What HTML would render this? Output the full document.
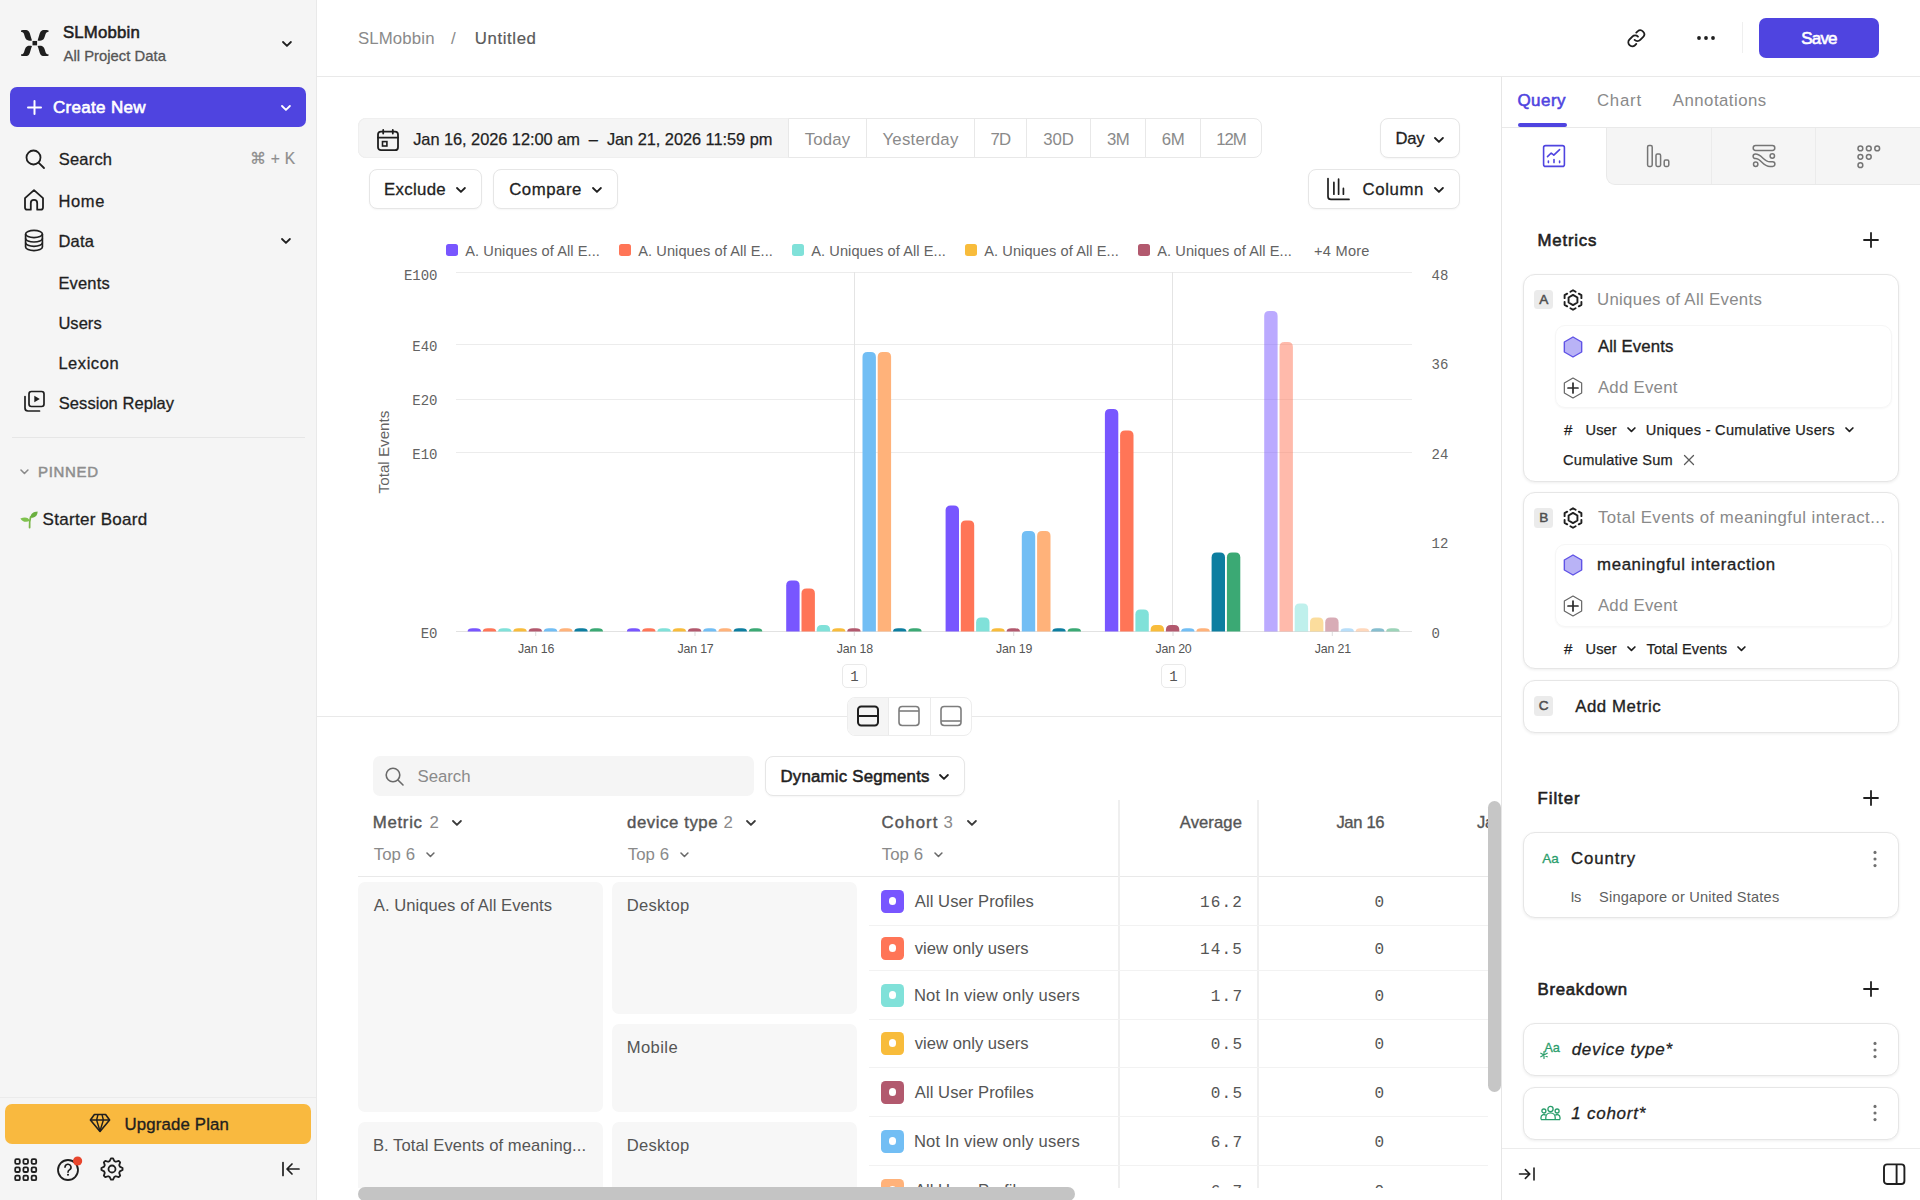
<!DOCTYPE html>
<html><head><meta charset="utf-8"><title>Untitled - Mixpanel</title>
<style>
*{box-sizing:border-box;margin:0;padding:0}
html,body{width:1920px;height:1200px;overflow:hidden;background:#fff}
body{font-family:"Liberation Sans",sans-serif;position:relative;color:#1f1f1f;-webkit-font-smoothing:antialiased}
.b{position:absolute;display:block}
.t{position:absolute;white-space:nowrap}
.card{position:absolute;background:#fff;border:1px solid #e6e6e6;border-radius:12px;box-shadow:0 1px 3px rgba(0,0,0,.07)}
.btn{position:absolute;background:#fff;border:1px solid #e6e6e6;border-radius:8px;box-shadow:0 1px 2px rgba(0,0,0,.04)}
</style></head><body>

<div class="b" style="left:0px;top:0px;width:317px;height:1200px;background:#f5f5f5;border-right:1px solid #e9e9e9"></div>
<svg class="b" style="left:21.0px;top:29.8px;" width="27.6" height="26.3" viewBox="0 0 27.6 26.3" fill="none">
<path d="M0 0.45 C3 0 6.6 -0.5 8.1 1.8 C9.3 4 9.8 7.5 11 10.4 C8 11 5.6 10.5 4.6 8.6 C3.6 6.6 3.3 4.2 2.5 3.1 C1.9 2.2 1.1 1.95 0.15 1.95 Z" fill="#1f1f1f"/>
<path d="M0 0.45 C3 0 6.6 -0.5 8.1 1.8 C9.3 4 9.8 7.5 11 10.4 C8 11 5.6 10.5 4.6 8.6 C3.6 6.6 3.3 4.2 2.5 3.1 C1.9 2.2 1.1 1.95 0.15 1.95 Z" fill="#1f1f1f" transform="translate(27.6 0) scale(-1 1)"/>
<path d="M0 0.45 C3 0 6.6 -0.5 8.1 1.8 C9.3 4 9.8 7.5 11 10.4 C8 11 5.6 10.5 4.6 8.6 C3.6 6.6 3.3 4.2 2.5 3.1 C1.9 2.2 1.1 1.95 0.15 1.95 Z" fill="#1f1f1f" transform="translate(0 26.3) scale(1 -1)"/>
<path d="M0 0.45 C3 0 6.6 -0.5 8.1 1.8 C9.3 4 9.8 7.5 11 10.4 C8 11 5.6 10.5 4.6 8.6 C3.6 6.6 3.3 4.2 2.5 3.1 C1.9 2.2 1.1 1.95 0.15 1.95 Z" fill="#1f1f1f" transform="translate(27.6 26.3) scale(-1 -1)"/>
<rect x="11.5" y="10.95" width="4.6" height="4.4" fill="#1f1f1f"/>
</svg>
<div class="t" style="left:63.0px;top:20.5px;line-height:24px;font-size:16.8px;font-weight:400;color:#1f1f1f;-webkit-text-stroke:.55px #1f1f1f;letter-spacing:0.17px;">SLMobbin</div>
<div class="t" style="left:63.5px;top:43.5px;line-height:24px;font-size:14.8px;font-weight:400;color:#555;-webkit-text-stroke:.3px #555;letter-spacing:0.03px;">All Project Data</div>
<svg class="b" style="left:281.05px;top:40.025px;" width="11.9" height="7.95" viewBox="0 0 11.9 7.95" fill="none"><path d="M2 2 L5.95 5.95 L9.9 2" stroke="#1f1f1f" stroke-width="1.8" stroke-linecap="round" stroke-linejoin="round"/></svg>
<div class="b" style="left:10px;top:87px;width:296px;height:40px;background:#4f44e0;border-radius:7px"></div>
<svg class="b" style="left:26.700000000000003px;top:99.9px;" width="15" height="15" viewBox="0 0 15 15" fill="none"><path d="M7.5 1 V14 M1 7.5 H14" stroke="#fff" stroke-width="2" stroke-linecap="round"/></svg>
<div class="t" style="left:53.0px;top:95.5px;line-height:24px;font-size:17px;font-weight:400;color:#fff;-webkit-text-stroke:.6px #fff;letter-spacing:0.31px;">Create New</div>
<svg class="b" style="left:279.55px;top:104.025px;" width="11.9" height="7.95" viewBox="0 0 11.9 7.95" fill="none"><path d="M2 2 L5.95 5.95 L9.9 2" stroke="#fff" stroke-width="1.8" stroke-linecap="round" stroke-linejoin="round"/></svg>
<svg class="b" style="left:24px;top:148px;" width="22" height="22" viewBox="0 0 22 22" fill="none"><circle cx="9.5" cy="9.5" r="7" stroke="#1f1f1f" stroke-width="1.8"/><path d="M14.8 14.8 L20 20" stroke="#1f1f1f" stroke-width="1.8" stroke-linecap="round"/></svg>
<div class="t" style="left:58.8px;top:147.0px;line-height:24px;font-size:16.5px;font-weight:400;color:#1f1f1f;-webkit-text-stroke:.3px #1f1f1f;letter-spacing:0.19px;">Search</div>
<div class="t" style="right:1624.5px;text-align:right;top:147.0px;line-height:24px;font-size:15.6px;font-weight:400;color:#8e8e8e;-webkit-text-stroke:.2px #8e8e8e;letter-spacing:0.26px;">&#8984; + K</div>
<svg class="b" style="left:23px;top:188px;" width="22" height="24" viewBox="0 0 22 24" fill="none"><path d="M2 10.2 L11 2.2 L20 10.2 V19.5 a2.2 2.2 0 0 1 -2.2 2.2 H14.2 V15 a3.2 3.2 0 0 0 -6.4 0 V21.7 H4.2 A2.2 2.2 0 0 1 2 19.5 Z" stroke="#1f1f1f" stroke-width="1.8" stroke-linejoin="round"/></svg>
<div class="t" style="left:58.4px;top:189.0px;line-height:24px;font-size:16.5px;font-weight:400;color:#1f1f1f;-webkit-text-stroke:.3px #1f1f1f;letter-spacing:0.67px;">Home</div>
<svg class="b" style="left:24px;top:229px;" width="20" height="23" viewBox="0 0 20 23" fill="none"><ellipse cx="10" cy="5" rx="8.4" ry="3.6" stroke="#1f1f1f" stroke-width="1.7"/>
<path d="M1.6 5 V18 c0 2 3.8 3.6 8.4 3.6 s8.4 -1.6 8.4 -3.6 V5" stroke="#1f1f1f" stroke-width="1.7"/>
<path d="M1.6 9.4 c0 2 3.8 3.6 8.4 3.6 s8.4 -1.6 8.4 -3.6 M1.6 13.7 c0 2 3.8 3.6 8.4 3.6 s8.4 -1.6 8.4 -3.6" stroke="#1f1f1f" stroke-width="1.7"/></svg>
<div class="t" style="left:58.4px;top:229.0px;line-height:24px;font-size:16.5px;font-weight:400;color:#1f1f1f;-webkit-text-stroke:.3px #1f1f1f;letter-spacing:0.26px;">Data</div>
<svg class="b" style="left:280.05px;top:237.025px;" width="11.9" height="7.95" viewBox="0 0 11.9 7.95" fill="none"><path d="M2 2 L5.95 5.95 L9.9 2" stroke="#1f1f1f" stroke-width="1.8" stroke-linecap="round" stroke-linejoin="round"/></svg>
<div class="t" style="left:58.4px;top:271.0px;line-height:24px;font-size:16.5px;font-weight:400;color:#1f1f1f;-webkit-text-stroke:.3px #1f1f1f;letter-spacing:0.17px;">Events</div>
<div class="t" style="left:58.4px;top:311.0px;line-height:24px;font-size:16.5px;font-weight:400;color:#1f1f1f;-webkit-text-stroke:.3px #1f1f1f;letter-spacing:0.04px;">Users</div>
<div class="t" style="left:58.4px;top:351.0px;line-height:24px;font-size:16.5px;font-weight:400;color:#1f1f1f;-webkit-text-stroke:.3px #1f1f1f;letter-spacing:0.55px;">Lexicon</div>
<svg class="b" style="left:23px;top:390px;" width="23" height="23" viewBox="0 0 23 23" fill="none"><rect x="6" y="1.5" width="15" height="15" rx="2.4" stroke="#1f1f1f" stroke-width="1.7"/>
<path d="M2 6.5 V18 a3 3 0 0 0 3 3 H16.5" stroke="#1f1f1f" stroke-width="1.7" stroke-linecap="round"/>
<path d="M11.3 5.8 L16.8 9 L11.3 12.2 Z" fill="#1f1f1f"/></svg>
<div class="t" style="left:58.8px;top:391.0px;line-height:24px;font-size:16.5px;font-weight:400;color:#1f1f1f;-webkit-text-stroke:.3px #1f1f1f;letter-spacing:0.05px;">Session Replay</div>
<div class="b" style="left:12px;top:437px;width:293px;height:1px;background:#e6e6e6"></div>
<svg class="b" style="left:18.55px;top:468.275px;" width="10.9" height="7.45" viewBox="0 0 10.9 7.45" fill="none"><path d="M2 2 L5.45 5.45 L8.9 2" stroke="#8a8a8a" stroke-width="1.6" stroke-linecap="round" stroke-linejoin="round"/></svg>
<div class="t" style="left:38.0px;top:460.0px;line-height:24px;font-size:15px;font-weight:400;color:#8e8e8e;-webkit-text-stroke:.5px #8e8e8e;letter-spacing:0.67px;">PINNED</div>
<svg class="b" style="left:19px;top:509px;" width="20" height="20" viewBox="0 0 20 20" fill="none"><path d="M10.6 18.5 C10.4 14 10.6 11 11.6 8" stroke="#7ab648" stroke-width="1.8" stroke-linecap="round"/>
<path d="M11.4 8.6 C11.6 4.6 14 2.6 18.6 2.4 C18.6 6.6 16 9 11.4 8.6 Z" fill="#6bb040"/>
<path d="M10.8 11.8 C9.6 8.6 6.4 7.6 1.4 9.4 C3.4 12.8 7 13.6 10.8 11.8 Z" fill="#7fc24e"/></svg>
<div class="t" style="left:42.5px;top:508.0px;line-height:24px;font-size:17px;font-weight:400;color:#1f1f1f;-webkit-text-stroke:.3px #1f1f1f;letter-spacing:0.30px;">Starter Board</div>
<div class="b" style="left:0px;top:1097px;width:316px;height:1px;background:#ebebeb"></div>
<div class="b" style="left:5px;top:1104px;width:306px;height:40px;background:#f9b93f;border-radius:7px"></div>
<svg class="b" style="left:89px;top:1113px;" width="22" height="20" viewBox="0 0 22 20" fill="none"><path d="M5.4 1.5 H16.6 L20.6 7 L11 18.4 L1.4 7 Z" stroke="#1f1f1f" stroke-width="1.6" stroke-linejoin="round"/>
<path d="M1.4 7 H20.6 M7.6 7 L11 18 L14.4 7 M7.6 7 L9 1.6 M14.4 7 L13 1.6" stroke="#1f1f1f" stroke-width="1.4" stroke-linejoin="round"/></svg>
<div class="t" style="left:124.39999999999999px;top:1113.0px;line-height:24px;font-size:16.8px;font-weight:400;color:#1f1f1f;-webkit-text-stroke:.35px #1f1f1f;letter-spacing:0.17px;">Upgrade Plan</div>
<svg class="b" style="left:14px;top:1158px;" width="24" height="24" viewBox="0 0 24 24" fill="none"><rect x="1.2" y="1.2" width="4.6" height="4.6" rx="1.3" stroke="#1f1f1f" stroke-width="1.8"/><rect x="9.399999999999999" y="1.2" width="4.6" height="4.6" rx="1.3" stroke="#1f1f1f" stroke-width="1.8"/><rect x="17.599999999999998" y="1.2" width="4.6" height="4.6" rx="1.3" stroke="#1f1f1f" stroke-width="1.8"/><rect x="1.2" y="9.399999999999999" width="4.6" height="4.6" rx="1.3" stroke="#1f1f1f" stroke-width="1.8"/><rect x="9.399999999999999" y="9.399999999999999" width="4.6" height="4.6" rx="1.3" stroke="#1f1f1f" stroke-width="1.8"/><rect x="17.599999999999998" y="9.399999999999999" width="4.6" height="4.6" rx="1.3" stroke="#1f1f1f" stroke-width="1.8"/><rect x="1.2" y="17.599999999999998" width="4.6" height="4.6" rx="1.3" stroke="#1f1f1f" stroke-width="1.8"/><rect x="9.399999999999999" y="17.599999999999998" width="4.6" height="4.6" rx="1.3" stroke="#1f1f1f" stroke-width="1.8"/><rect x="17.599999999999998" y="17.599999999999998" width="4.6" height="4.6" rx="1.3" stroke="#1f1f1f" stroke-width="1.8"/></svg>
<svg class="b" style="left:56px;top:1154px;" width="28" height="28" viewBox="0 0 28 28" fill="none"><circle cx="12" cy="16" r="10" stroke="#1f1f1f" stroke-width="1.8"/>
<path d="M9 13.2 a3 3 0 1 1 4.4 2.7 c-1 .6 -1.4 1.1 -1.4 2.3" stroke="#1f1f1f" stroke-width="1.6" stroke-linecap="round"/><circle cx="12" cy="20.8" r="1.05" fill="#1f1f1f"/>
<circle cx="21.6" cy="7" r="4.6" fill="#e8452c"/></svg>
<svg class="b" style="left:100px;top:1157px;" width="24" height="24" viewBox="0 0 24 24" fill="none"><path d="M22.55 10.96 L22.55 13.04 L19.85 14.38 L19.23 15.87 L20.19 18.72 L18.72 20.19 L15.87 19.23 L14.38 19.85 L13.04 22.55 L10.96 22.55 L9.62 19.85 L8.13 19.23 L5.28 20.19 L3.81 18.72 L4.77 15.87 L4.15 14.38 L1.45 13.04 L1.45 10.96 L4.15 9.62 L4.77 8.13 L3.81 5.28 L5.28 3.81 L8.13 4.77 L9.62 4.15 L10.96 1.45 L13.04 1.45 L14.38 4.15 L15.87 4.77 L18.72 3.81 L20.19 5.28 L19.23 8.13 L19.85 9.62 Z" stroke="#1f1f1f" stroke-width="1.8" stroke-linejoin="round"/><circle cx="12" cy="12" r="3.5" stroke="#1f1f1f" stroke-width="1.8"/></svg>
<svg class="b" style="left:281px;top:1160px;" width="20" height="18" viewBox="0 0 20 18" fill="none"><path d="M2 2.5 V15.5 M18 9 H6.5 M11 4 L6 9 L11 14" stroke="#1f1f1f" stroke-width="1.7" stroke-linecap="round" stroke-linejoin="round"/></svg>
<div class="b" style="left:317px;top:76px;width:1603px;height:1px;background:#e9e9e9"></div>
<div class="t" style="left:357.9px;top:27.0px;line-height:24px;font-size:16.8px;font-weight:400;color:#8a8a8a;letter-spacing:0.15px;">SLMobbin</div>
<div class="t" style="left:451px;top:27.0px;line-height:24px;font-size:17px;font-weight:400;color:#8a8a8a;">/</div>
<div class="t" style="left:474.70000000000005px;top:27.0px;line-height:24px;font-size:16.8px;font-weight:400;color:#5a5a5a;-webkit-text-stroke:.2px #5a5a5a;letter-spacing:0.62px;">Untitled</div>
<svg class="b" style="left:1625.6px;top:27.6px;" width="20.6" height="20.6" viewBox="0 0 22 22" fill="none"><path d="M9.2 12.8 a4.2 4.2 0 0 0 6 0 l3.2 -3.2 a4.25 4.25 0 0 0 -6 -6 l-1.4 1.4" stroke="#1f1f1f" stroke-width="1.9" stroke-linecap="round"/>
<path d="M12.8 9.2 a4.2 4.2 0 0 0 -6 0 l-3.2 3.2 a4.25 4.25 0 0 0 6 6 l1.4 -1.4" stroke="#1f1f1f" stroke-width="2" stroke-linecap="round"/></svg>
<svg class="b" style="left:1696px;top:35.4px;" width="20" height="6" viewBox="0 0 20 6" fill="none"><circle cx="3" cy="3" r="1.9" fill="#1f1f1f"/><circle cx="10" cy="3" r="1.9" fill="#1f1f1f"/><circle cx="17" cy="3" r="1.9" fill="#1f1f1f"/></svg>
<div class="b" style="left:1742px;top:22px;width:1px;height:31px;background:#efefef"></div>
<div class="b" style="left:1759px;top:18px;width:120px;height:40px;background:#4f44e0;border-radius:7px"></div>
<div class="t" style="left:1819px;transform:translateX(-50%);top:26.5px;line-height:24px;font-size:17px;font-weight:400;color:#fff;-webkit-text-stroke:.6px #fff;letter-spacing:-0.84px;">Save</div>
<div class="b" style="left:358px;top:118px;width:904px;height:40px;border:1px solid #e8e8e8;border-radius:8px;background:#fff"></div>
<div class="b" style="left:358px;top:118px;width:431px;height:40px;background:#f5f5f5;border-radius:8px 0 0 8px;border:1px solid #efefef;border-right:1px solid #e8e8e8"></div>
<svg class="b" style="left:376.3px;top:127.6px;" width="24" height="24" viewBox="0 0 24 24" fill="none"><rect x="2" y="3.6" width="20" height="18.6" rx="3" stroke="#1f1f1f" stroke-width="1.8"/>
<path d="M2 9.6 H22 M7.2 2 V5.6 M16.8 2 V5.6" stroke="#1f1f1f" stroke-width="1.8" stroke-linecap="round"/>
<rect x="6.5" y="13.6" width="4.4" height="4.4" stroke="#1f1f1f" stroke-width="1.6"/></svg>
<div class="t" style="left:413.2px;top:127.0px;line-height:24px;font-size:16.4px;font-weight:400;color:#1f1f1f;-webkit-text-stroke:.25px #1f1f1f;letter-spacing:-0.05px;">Jan 16, 2026 12:00 am &nbsp;&#8211;&nbsp; Jan 21, 2026 11:59 pm</div>
<div class="t" style="left:827.5px;transform:translateX(-50%);top:128.0px;line-height:24px;font-size:16.8px;font-weight:400;color:#8a8a8a;letter-spacing:0.10px;">Today</div>
<div class="b" style="left:866px;top:119px;width:1px;height:38px;background:#e8e8e8"></div>
<div class="t" style="left:920.5px;transform:translateX(-50%);top:128.0px;line-height:24px;font-size:16.8px;font-weight:400;color:#8a8a8a;letter-spacing:0.22px;">Yesterday</div>
<div class="b" style="left:974px;top:119px;width:1px;height:38px;background:#e8e8e8"></div>
<div class="t" style="left:1000.5px;transform:translateX(-50%);top:128.0px;line-height:24px;font-size:16.8px;font-weight:400;color:#8a8a8a;letter-spacing:-0.73px;">7D</div>
<div class="b" style="left:1026px;top:119px;width:1px;height:38px;background:#e8e8e8"></div>
<div class="t" style="left:1058.5px;transform:translateX(-50%);top:128.0px;line-height:24px;font-size:16.8px;font-weight:400;color:#8a8a8a;letter-spacing:-0.07px;">30D</div>
<div class="b" style="left:1090px;top:119px;width:1px;height:38px;background:#e8e8e8"></div>
<div class="t" style="left:1118.0px;transform:translateX(-50%);top:128.0px;line-height:24px;font-size:16.8px;font-weight:400;color:#8a8a8a;letter-spacing:-0.66px;">3M</div>
<div class="b" style="left:1145px;top:119px;width:1px;height:38px;background:#e8e8e8"></div>
<div class="t" style="left:1173.0px;transform:translateX(-50%);top:128.0px;line-height:24px;font-size:16.8px;font-weight:400;color:#8a8a8a;letter-spacing:-0.41px;">6M</div>
<div class="b" style="left:1200px;top:119px;width:1px;height:38px;background:#e8e8e8"></div>
<div class="t" style="left:1231.0px;transform:translateX(-50%);top:128.0px;line-height:24px;font-size:16.8px;font-weight:400;color:#8a8a8a;letter-spacing:-1.00px;">12M</div>
<div class="btn" style="left:1380px;top:118px;width:80px;height:40px"></div>
<div class="t" style="left:1395.3999999999999px;top:127.0px;line-height:24px;font-size:16.6px;font-weight:400;color:#1f1f1f;-webkit-text-stroke:.3px #1f1f1f;letter-spacing:-0.21px;">Day</div>
<svg class="b" style="left:1432.55px;top:135.525px;" width="11.9" height="7.95" viewBox="0 0 11.9 7.95" fill="none"><path d="M2 2 L5.95 5.95 L9.9 2" stroke="#1f1f1f" stroke-width="1.8" stroke-linecap="round" stroke-linejoin="round"/></svg>
<div class="btn" style="left:369px;top:169px;width:113px;height:40px"></div>
<div class="t" style="left:384.1px;top:178.0px;line-height:24px;font-size:16.8px;font-weight:400;color:#1f1f1f;-webkit-text-stroke:.3px #1f1f1f;letter-spacing:0.31px;">Exclude</div>
<svg class="b" style="left:455.05px;top:186.025px;" width="11.9" height="7.95" viewBox="0 0 11.9 7.95" fill="none"><path d="M2 2 L5.95 5.95 L9.9 2" stroke="#1f1f1f" stroke-width="1.8" stroke-linecap="round" stroke-linejoin="round"/></svg>
<div class="btn" style="left:493px;top:169px;width:125px;height:40px"></div>
<div class="t" style="left:509.2px;top:178.0px;line-height:24px;font-size:16.8px;font-weight:400;color:#1f1f1f;-webkit-text-stroke:.3px #1f1f1f;letter-spacing:0.54px;">Compare</div>
<svg class="b" style="left:591.05px;top:186.025px;" width="11.9" height="7.95" viewBox="0 0 11.9 7.95" fill="none"><path d="M2 2 L5.95 5.95 L9.9 2" stroke="#1f1f1f" stroke-width="1.8" stroke-linecap="round" stroke-linejoin="round"/></svg>
<div class="btn" style="left:1308px;top:169px;width:152px;height:40px"></div>
<svg class="b" style="left:1326px;top:177px;" width="25" height="25" viewBox="0 0 25 25" fill="none"><path d="M2 1.6 V19.4 a3 3 0 0 0 3 3 H23" stroke="#1f1f1f" stroke-width="1.7" stroke-linecap="round"/>
<path d="M7.9 5.4 V17.2 M12.6 2.2 V17.2 M17.4 11.4 V17.2" stroke="#1f1f1f" stroke-width="1.7" stroke-linecap="round"/></svg>
<div class="t" style="left:1362.5px;top:178.0px;line-height:24px;font-size:16.8px;font-weight:400;color:#1f1f1f;-webkit-text-stroke:.3px #1f1f1f;letter-spacing:0.60px;">Column</div>
<svg class="b" style="left:1432.55px;top:186.025px;" width="11.9" height="7.95" viewBox="0 0 11.9 7.95" fill="none"><path d="M2 2 L5.95 5.95 L9.9 2" stroke="#1f1f1f" stroke-width="1.8" stroke-linecap="round" stroke-linejoin="round"/></svg>
<div class="b" style="left:446px;top:244px;width:12px;height:12px;background:#7856ff;border-radius:2.5px"></div>
<div class="t" style="left:465.2px;top:239.0px;line-height:24px;font-size:14.6px;font-weight:400;color:#636363;letter-spacing:0.08px;">A. Uniques of All E...</div>
<div class="b" style="left:619px;top:244px;width:12px;height:12px;background:#ff7557;border-radius:2.5px"></div>
<div class="t" style="left:638.2px;top:239.0px;line-height:24px;font-size:14.6px;font-weight:400;color:#636363;letter-spacing:0.08px;">A. Uniques of All E...</div>
<div class="b" style="left:792px;top:244px;width:12px;height:12px;background:#80e1d9;border-radius:2.5px"></div>
<div class="t" style="left:811.2px;top:239.0px;line-height:24px;font-size:14.6px;font-weight:400;color:#636363;letter-spacing:0.08px;">A. Uniques of All E...</div>
<div class="b" style="left:965px;top:244px;width:12px;height:12px;background:#f8bc3b;border-radius:2.5px"></div>
<div class="t" style="left:984.2px;top:239.0px;line-height:24px;font-size:14.6px;font-weight:400;color:#636363;letter-spacing:0.08px;">A. Uniques of All E...</div>
<div class="b" style="left:1138px;top:244px;width:12px;height:12px;background:#b2596e;border-radius:2.5px"></div>
<div class="t" style="left:1157.2px;top:239.0px;line-height:24px;font-size:14.6px;font-weight:400;color:#636363;letter-spacing:0.08px;">A. Uniques of All E...</div>
<div class="t" style="left:1314.1px;top:239.0px;line-height:24px;font-size:14.6px;font-weight:400;color:#636363;letter-spacing:0.24px;">+4 More</div>
<div class="b" style="left:456px;top:272px;width:956px;height:1px;background:#ececec"></div>
<div class="b" style="left:456px;top:344px;width:956px;height:1px;background:#ececec"></div>
<div class="b" style="left:456px;top:399px;width:956px;height:1px;background:#ececec"></div>
<div class="b" style="left:456px;top:452px;width:956px;height:1px;background:#ececec"></div>
<div class="b" style="left:456px;top:631px;width:956px;height:1px;background:#e2e2e2"></div>
<div class="b" style="left:854px;top:272px;width:1px;height:360px;background:#e4e4e4"></div>
<div class="b" style="left:1172px;top:272px;width:1px;height:360px;background:#e4e4e4"></div>
<div class="t" style="right:1482.5px;text-align:right;top:264.0px;line-height:24px;font-size:14px;font-weight:400;color:#636363;font-family:'Liberation Mono',monospace;">E100</div>
<div class="t" style="right:1482.5px;text-align:right;top:335.0px;line-height:24px;font-size:14px;font-weight:400;color:#636363;font-family:'Liberation Mono',monospace;">E40</div>
<div class="t" style="right:1482.5px;text-align:right;top:389.0px;line-height:24px;font-size:14px;font-weight:400;color:#636363;font-family:'Liberation Mono',monospace;">E20</div>
<div class="t" style="right:1482.5px;text-align:right;top:443.0px;line-height:24px;font-size:14px;font-weight:400;color:#636363;font-family:'Liberation Mono',monospace;">E10</div>
<div class="t" style="right:1482.5px;text-align:right;top:622.0px;line-height:24px;font-size:14px;font-weight:400;color:#636363;font-family:'Liberation Mono',monospace;">E0</div>
<div class="t" style="left:1431.5px;top:264.0px;line-height:24px;font-size:14px;font-weight:400;color:#636363;font-family:'Liberation Mono',monospace;">48</div>
<div class="t" style="left:1431.5px;top:353.0px;line-height:24px;font-size:14px;font-weight:400;color:#636363;font-family:'Liberation Mono',monospace;">36</div>
<div class="t" style="left:1431.5px;top:443.0px;line-height:24px;font-size:14px;font-weight:400;color:#636363;font-family:'Liberation Mono',monospace;">24</div>
<div class="t" style="left:1431.5px;top:532.0px;line-height:24px;font-size:14px;font-weight:400;color:#636363;font-family:'Liberation Mono',monospace;">12</div>
<div class="t" style="left:1431.5px;top:622.0px;line-height:24px;font-size:14px;font-weight:400;color:#636363;font-family:'Liberation Mono',monospace;">0</div>
<div class="t" style="left:284px;top:440px;width:200px;text-align:center;line-height:24px;font-size:15.2px;color:#636363;transform:rotate(-90deg)">Total Events</div>
<svg class="b" style="left:0;top:0" width="1920" height="700" viewBox="0 0 1920 700"><rect x="535.2" y="632" width="1" height="4" fill="#dcdcdc"/><path d="M467.6 631.5 V631.5 Q467.6 628.3 472.6 628.3 H476.0 Q481.0 628.3 481.0 631.5 V631.5 Z" fill="#7856ff"/><path d="M482.8 631.5 V631.5 Q482.8 628.3 487.8 628.3 H491.2 Q496.2 628.3 496.2 631.5 V631.5 Z" fill="#ff7557"/><path d="M498.1 631.5 V631.5 Q498.1 628.3 503.1 628.3 H506.5 Q511.5 628.3 511.5 631.5 V631.5 Z" fill="#80e1d9"/><path d="M513.3 631.5 V631.5 Q513.3 628.3 518.3 628.3 H521.7 Q526.7 628.3 526.7 631.5 V631.5 Z" fill="#f8bc3b"/><path d="M528.6 631.5 V631.5 Q528.6 628.3 533.6 628.3 H537.0 Q542.0 628.3 542.0 631.5 V631.5 Z" fill="#b2596e"/><path d="M543.8 631.5 V631.5 Q543.8 628.3 548.8 628.3 H552.2 Q557.2 628.3 557.2 631.5 V631.5 Z" fill="#72bef4"/><path d="M559.1 631.5 V631.5 Q559.1 628.3 564.1 628.3 H567.5 Q572.5 628.3 572.5 631.5 V631.5 Z" fill="#ffb27a"/><path d="M574.3 631.5 V631.5 Q574.3 628.3 579.3 628.3 H582.7 Q587.7 628.3 587.7 631.5 V631.5 Z" fill="#0d7ea0"/><path d="M589.6 631.5 V631.5 Q589.6 628.3 594.6 628.3 H598.0 Q603.0 628.3 603.0 631.5 V631.5 Z" fill="#3ba974"/><rect x="694.5" y="632" width="1" height="4" fill="#dcdcdc"/><path d="M626.9 631.5 V631.5 Q626.9 628.3 631.9 628.3 H635.3 Q640.3 628.3 640.3 631.5 V631.5 Z" fill="#7856ff"/><path d="M642.1 631.5 V631.5 Q642.1 628.3 647.1 628.3 H650.5 Q655.5 628.3 655.5 631.5 V631.5 Z" fill="#ff7557"/><path d="M657.4 631.5 V631.5 Q657.4 628.3 662.4 628.3 H665.8 Q670.8 628.3 670.8 631.5 V631.5 Z" fill="#80e1d9"/><path d="M672.6 631.5 V631.5 Q672.6 628.3 677.6 628.3 H681.0 Q686.0 628.3 686.0 631.5 V631.5 Z" fill="#f8bc3b"/><path d="M687.9 631.5 V631.5 Q687.9 628.3 692.9 628.3 H696.3 Q701.3 628.3 701.3 631.5 V631.5 Z" fill="#b2596e"/><path d="M703.1 631.5 V631.5 Q703.1 628.3 708.1 628.3 H711.5 Q716.5 628.3 716.5 631.5 V631.5 Z" fill="#72bef4"/><path d="M718.4 631.5 V631.5 Q718.4 628.3 723.4 628.3 H726.8 Q731.8 628.3 731.8 631.5 V631.5 Z" fill="#ffb27a"/><path d="M733.6 631.5 V631.5 Q733.6 628.3 738.6 628.3 H742.0 Q747.0 628.3 747.0 631.5 V631.5 Z" fill="#0d7ea0"/><path d="M748.9 631.5 V631.5 Q748.9 628.3 753.9 628.3 H757.3 Q762.3 628.3 762.3 631.5 V631.5 Z" fill="#3ba974"/><rect x="853.8" y="632" width="1" height="4" fill="#dcdcdc"/><path d="M786.2 631.5 V585.5 Q786.2 580.5 791.2 580.5 H794.6 Q799.6 580.5 799.6 585.5 V631.5 Z" fill="#7856ff"/><path d="M801.5 631.5 V593.5 Q801.5 588.5 806.5 588.5 H809.9 Q814.9 588.5 814.9 593.5 V631.5 Z" fill="#ff7557"/><path d="M816.7 631.5 V630.0 Q816.7 625.0 821.7 625.0 H825.1 Q830.1 625.0 830.1 630.0 V631.5 Z" fill="#80e1d9"/><path d="M832.0 631.5 V631.5 Q832.0 628.3 837.0 628.3 H840.4 Q845.4 628.3 845.4 631.5 V631.5 Z" fill="#f8bc3b"/><path d="M847.2 631.5 V631.5 Q847.2 628.3 852.2 628.3 H855.6 Q860.6 628.3 860.6 631.5 V631.5 Z" fill="#b2596e"/><path d="M862.5 631.5 V357.0 Q862.5 352.0 867.5 352.0 H870.9 Q875.9 352.0 875.9 357.0 V631.5 Z" fill="#72bef4"/><path d="M877.7 631.5 V357.0 Q877.7 352.0 882.7 352.0 H886.1 Q891.1 352.0 891.1 357.0 V631.5 Z" fill="#ffb27a"/><path d="M893.0 631.5 V631.5 Q893.0 628.3 898.0 628.3 H901.4 Q906.4 628.3 906.4 631.5 V631.5 Z" fill="#0d7ea0"/><path d="M908.2 631.5 V631.5 Q908.2 628.3 913.2 628.3 H916.6 Q921.6 628.3 921.6 631.5 V631.5 Z" fill="#3ba974"/><rect x="1013.2" y="632" width="1" height="4" fill="#dcdcdc"/><path d="M945.6 631.5 V510.5 Q945.6 505.5 950.6 505.5 H954.0 Q959.0 505.5 959.0 510.5 V631.5 Z" fill="#7856ff"/><path d="M960.8 631.5 V525.5 Q960.8 520.5 965.8 520.5 H969.2 Q974.2 520.5 974.2 525.5 V631.5 Z" fill="#ff7557"/><path d="M976.1 631.5 V622.5 Q976.1 617.5 981.1 617.5 H984.5 Q989.5 617.5 989.5 622.5 V631.5 Z" fill="#80e1d9"/><path d="M991.3 631.5 V631.5 Q991.3 628.3 996.3 628.3 H999.7 Q1004.7 628.3 1004.7 631.5 V631.5 Z" fill="#f8bc3b"/><path d="M1006.6 631.5 V631.5 Q1006.6 628.3 1011.6 628.3 H1015.0 Q1020.0 628.3 1020.0 631.5 V631.5 Z" fill="#b2596e"/><path d="M1021.8 631.5 V536.0 Q1021.8 531.0 1026.8 531.0 H1030.2 Q1035.2 531.0 1035.2 536.0 V631.5 Z" fill="#72bef4"/><path d="M1037.1 631.5 V536.0 Q1037.1 531.0 1042.1 531.0 H1045.5 Q1050.5 531.0 1050.5 536.0 V631.5 Z" fill="#ffb27a"/><path d="M1052.3 631.5 V631.5 Q1052.3 628.3 1057.3 628.3 H1060.7 Q1065.7 628.3 1065.7 631.5 V631.5 Z" fill="#0d7ea0"/><path d="M1067.6 631.5 V631.5 Q1067.6 628.3 1072.6 628.3 H1076.0 Q1081.0 628.3 1081.0 631.5 V631.5 Z" fill="#3ba974"/><rect x="1172.5" y="632" width="1" height="4" fill="#dcdcdc"/><path d="M1104.9 631.5 V414.0 Q1104.9 409.0 1109.9 409.0 H1113.3 Q1118.3 409.0 1118.3 414.0 V631.5 Z" fill="#7856ff"/><path d="M1120.1 631.5 V435.5 Q1120.1 430.5 1125.1 430.5 H1128.5 Q1133.5 430.5 1133.5 435.5 V631.5 Z" fill="#ff7557"/><path d="M1135.4 631.5 V614.5 Q1135.4 609.5 1140.4 609.5 H1143.8 Q1148.8 609.5 1148.8 614.5 V631.5 Z" fill="#80e1d9"/><path d="M1150.6 631.5 V630.0 Q1150.6 625.0 1155.6 625.0 H1159.0 Q1164.0 625.0 1164.0 630.0 V631.5 Z" fill="#f8bc3b"/><path d="M1165.9 631.5 V630.0 Q1165.9 625.0 1170.9 625.0 H1174.3 Q1179.3 625.0 1179.3 630.0 V631.5 Z" fill="#b2596e"/><path d="M1181.1 631.5 V631.5 Q1181.1 628.3 1186.1 628.3 H1189.5 Q1194.5 628.3 1194.5 631.5 V631.5 Z" fill="#72bef4"/><path d="M1196.4 631.5 V631.5 Q1196.4 628.3 1201.4 628.3 H1204.8 Q1209.8 628.3 1209.8 631.5 V631.5 Z" fill="#ffb27a"/><path d="M1211.6 631.5 V557.5 Q1211.6 552.5 1216.6 552.5 H1220.0 Q1225.0 552.5 1225.0 557.5 V631.5 Z" fill="#0d7ea0"/><path d="M1226.9 631.5 V557.5 Q1226.9 552.5 1231.9 552.5 H1235.3 Q1240.3 552.5 1240.3 557.5 V631.5 Z" fill="#3ba974"/><rect x="1331.8" y="632" width="1" height="4" fill="#dcdcdc"/><path d="M1264.2 631.5 V316.0 Q1264.2 311.0 1269.2 311.0 H1272.6 Q1277.6 311.0 1277.6 316.0 V631.5 Z" fill="#7856ff" opacity=".5"/><path d="M1279.5 631.5 V347.0 Q1279.5 342.0 1284.5 342.0 H1287.9 Q1292.9 342.0 1292.9 347.0 V631.5 Z" fill="#ff7557" opacity=".5"/><path d="M1294.7 631.5 V608.5 Q1294.7 603.5 1299.7 603.5 H1303.1 Q1308.1 603.5 1308.1 608.5 V631.5 Z" fill="#80e1d9" opacity=".5"/><path d="M1310.0 631.5 V622.5 Q1310.0 617.5 1315.0 617.5 H1318.4 Q1323.4 617.5 1323.4 622.5 V631.5 Z" fill="#f8bc3b" opacity=".5"/><path d="M1325.2 631.5 V622.5 Q1325.2 617.5 1330.2 617.5 H1333.6 Q1338.6 617.5 1338.6 622.5 V631.5 Z" fill="#b2596e" opacity=".5"/><path d="M1340.5 631.5 V631.5 Q1340.5 628.3 1345.5 628.3 H1348.9 Q1353.9 628.3 1353.9 631.5 V631.5 Z" fill="#72bef4" opacity=".5"/><path d="M1355.7 631.5 V631.5 Q1355.7 628.3 1360.7 628.3 H1364.1 Q1369.1 628.3 1369.1 631.5 V631.5 Z" fill="#ffb27a" opacity=".5"/><path d="M1371.0 631.5 V631.5 Q1371.0 628.3 1376.0 628.3 H1379.4 Q1384.4 628.3 1384.4 631.5 V631.5 Z" fill="#0d7ea0" opacity=".5"/><path d="M1386.2 631.5 V631.5 Q1386.2 628.3 1391.2 628.3 H1394.6 Q1399.6 628.3 1399.6 631.5 V631.5 Z" fill="#3ba974" opacity=".5"/></svg>
<div class="t" style="left:536.1666666666666px;transform:translateX(-50%);top:637.0px;line-height:24px;font-size:12.4px;font-weight:400;color:#555;letter-spacing:-0.17px;">Jan 16</div>
<div class="t" style="left:695.5px;transform:translateX(-50%);top:637.0px;line-height:24px;font-size:12.4px;font-weight:400;color:#555;letter-spacing:-0.17px;">Jan 17</div>
<div class="t" style="left:854.8333333333334px;transform:translateX(-50%);top:637.0px;line-height:24px;font-size:12.4px;font-weight:400;color:#555;letter-spacing:-0.17px;">Jan 18</div>
<div class="t" style="left:1014.1666666666667px;transform:translateX(-50%);top:637.0px;line-height:24px;font-size:12.4px;font-weight:400;color:#555;letter-spacing:-0.17px;">Jan 19</div>
<div class="t" style="left:1173.5px;transform:translateX(-50%);top:637.0px;line-height:24px;font-size:12.4px;font-weight:400;color:#555;letter-spacing:-0.17px;">Jan 20</div>
<div class="t" style="left:1332.8333333333335px;transform:translateX(-50%);top:637.0px;line-height:24px;font-size:12.4px;font-weight:400;color:#555;letter-spacing:-0.17px;">Jan 21</div>
<div class="b" style="left:842px;top:663.5px;width:24.5px;height:24.5px;border:1px solid #e9e9e9;border-radius:5px;background:#fff"></div>
<div class="t" style="left:654.5px;width:400px;text-align:center;top:665.0px;line-height:24px;font-size:14px;font-weight:400;color:#555;font-family:'Liberation Mono',monospace;">1</div>
<div class="b" style="left:1161px;top:663.5px;width:24.5px;height:24.5px;border:1px solid #e9e9e9;border-radius:5px;background:#fff"></div>
<div class="t" style="left:973.5px;width:400px;text-align:center;top:665.0px;line-height:24px;font-size:14px;font-weight:400;color:#555;font-family:'Liberation Mono',monospace;">1</div>
<div class="b" style="left:317px;top:716px;width:1184px;height:1px;background:#e9e9e9"></div>
<div class="b" style="left:847px;top:696.5px;width:125px;height:39.5px;background:#fff;border:1px solid #ededed;border-radius:8px"></div>
<div class="b" style="left:848px;top:697.5px;width:40px;height:37.5px;background:#f5f5f5;border-radius:7px 0 0 7px"></div>
<div class="b" style="left:888px;top:697.5px;width:1px;height:37.5px;background:#ebebeb"></div>
<div class="b" style="left:930px;top:697.5px;width:1px;height:37.5px;background:#ebebeb"></div>
<svg class="b" style="left:855.6px;top:703.8px;" width="24" height="24" viewBox="0 0 24 24" fill="none"><rect x="2" y="2.5" width="20" height="19" rx="3.2" stroke="#1f1f1f" stroke-width="2"/><path d="M2 12 H22" stroke="#1f1f1f" stroke-width="2"/></svg>
<svg class="b" style="left:897px;top:703.8px;" width="24" height="24" viewBox="0 0 24 24" fill="none"><rect x="2" y="2.5" width="20" height="19" rx="3.2" stroke="#7d7d7d" stroke-width="1.6"/><path d="M2 7 H22" stroke="#7d7d7d" stroke-width="1.6"/></svg>
<svg class="b" style="left:939px;top:703.8px;" width="24" height="24" viewBox="0 0 24 24" fill="none"><rect x="2" y="2.5" width="20" height="19" rx="3.2" stroke="#7d7d7d" stroke-width="1.6"/><path d="M2 17 H22" stroke="#7d7d7d" stroke-width="1.6"/></svg>
<div class="b" style="left:373px;top:756px;width:381px;height:40px;background:#f5f5f5;border-radius:7px"></div>
<svg class="b" style="left:384px;top:766px;" width="21" height="21" viewBox="0 0 21 21" fill="none"><circle cx="9" cy="9" r="6.8" stroke="#6a6a6a" stroke-width="1.6"/><path d="M14.2 14.2 L19 19" stroke="#6a6a6a" stroke-width="1.6" stroke-linecap="round"/></svg>
<div class="t" style="left:417.5px;top:765.0px;line-height:24px;font-size:16.8px;font-weight:400;color:#8a8a8a;letter-spacing:-0.03px;">Search</div>
<div class="btn" style="left:765px;top:756px;width:200px;height:40px"></div>
<div class="t" style="left:780.4px;top:765.0px;line-height:24px;font-size:16.8px;font-weight:400;color:#1f1f1f;-webkit-text-stroke:.55px #1f1f1f;letter-spacing:0.24px;">Dynamic Segments</div>
<svg class="b" style="left:938.05px;top:773.025px;" width="11.9" height="7.95" viewBox="0 0 11.9 7.95" fill="none"><path d="M2 2 L5.95 5.95 L9.9 2" stroke="#1f1f1f" stroke-width="1.8" stroke-linecap="round" stroke-linejoin="round"/></svg>
<div class="b" style="left:340px;top:800px;width:1148px;height:388px;overflow:hidden">
<div class="t" style="left:32.79999999999999px;top:11.0px;line-height:24px;font-size:16.8px;font-weight:400;color:#555;-webkit-text-stroke:.4px #555;letter-spacing:0.70px;">Metric</div>
<div class="t" style="left:89.5px;top:11.0px;line-height:24px;font-size:16.8px;font-weight:400;color:#8a8a8a;">2</div>
<div class="t" style="left:287.0px;top:11.0px;line-height:24px;font-size:16.8px;font-weight:400;color:#555;-webkit-text-stroke:.4px #555;letter-spacing:0.57px;">device type</div>
<div class="t" style="left:383.6px;top:11.0px;line-height:24px;font-size:16.8px;font-weight:400;color:#8a8a8a;">2</div>
<div class="t" style="left:541.5px;top:11.0px;line-height:24px;font-size:16.8px;font-weight:400;color:#555;-webkit-text-stroke:.4px #555;letter-spacing:1.12px;">Cohort</div>
<div class="t" style="left:603.4px;top:11.0px;line-height:24px;font-size:16.8px;font-weight:400;color:#8a8a8a;">3</div>
<svg class="b" style="left:110.55px;top:19.025px;" width="11.9" height="7.95" viewBox="0 0 11.9 7.95" fill="none"><path d="M2 2 L5.95 5.95 L9.9 2" stroke="#3a3a3a" stroke-width="1.8" stroke-linecap="round" stroke-linejoin="round"/></svg>
<svg class="b" style="left:405.05px;top:19.025px;" width="11.9" height="7.95" viewBox="0 0 11.9 7.95" fill="none"><path d="M2 2 L5.95 5.95 L9.9 2" stroke="#3a3a3a" stroke-width="1.8" stroke-linecap="round" stroke-linejoin="round"/></svg>
<svg class="b" style="left:625.55px;top:19.025px;" width="11.9" height="7.95" viewBox="0 0 11.9 7.95" fill="none"><path d="M2 2 L5.95 5.95 L9.9 2" stroke="#3a3a3a" stroke-width="1.8" stroke-linecap="round" stroke-linejoin="round"/></svg>
<div class="t" style="left:33.69999999999999px;top:43.0px;line-height:24px;font-size:16.8px;font-weight:400;color:#8a8a8a;letter-spacing:0.07px;">Top 6</div>
<svg class="b" style="left:84.55px;top:51.275px;" width="10.9" height="7.45" viewBox="0 0 10.9 7.45" fill="none"><path d="M2 2 L5.45 5.45 L8.9 2" stroke="#6a6a6a" stroke-width="1.6" stroke-linecap="round" stroke-linejoin="round"/></svg>
<div class="t" style="left:287.70000000000005px;top:43.0px;line-height:24px;font-size:16.8px;font-weight:400;color:#8a8a8a;letter-spacing:0.07px;">Top 6</div>
<svg class="b" style="left:338.55px;top:51.275px;" width="10.9" height="7.45" viewBox="0 0 10.9 7.45" fill="none"><path d="M2 2 L5.45 5.45 L8.9 2" stroke="#6a6a6a" stroke-width="1.6" stroke-linecap="round" stroke-linejoin="round"/></svg>
<div class="t" style="left:541.7px;top:43.0px;line-height:24px;font-size:16.8px;font-weight:400;color:#8a8a8a;letter-spacing:0.07px;">Top 6</div>
<svg class="b" style="left:592.55px;top:51.275px;" width="10.9" height="7.45" viewBox="0 0 10.9 7.45" fill="none"><path d="M2 2 L5.45 5.45 L8.9 2" stroke="#6a6a6a" stroke-width="1.6" stroke-linecap="round" stroke-linejoin="round"/></svg>
<div class="t" style="right:246px;text-align:right;top:11.0px;line-height:24px;font-size:16.6px;font-weight:400;color:#555;-webkit-text-stroke:.35px #555;letter-spacing:0.10px;">Average</div>
<div class="t" style="right:103.79999999999995px;text-align:right;top:11.0px;line-height:24px;font-size:16.6px;font-weight:400;color:#555;-webkit-text-stroke:.35px #555;letter-spacing:-0.34px;">Jan 16</div>
<div class="t" style="left:1137px;top:11.0px;line-height:24px;font-size:16.6px;font-weight:400;color:#555;-webkit-text-stroke:.35px #555;letter-spacing:-0.34px;">Jan 17</div>
<div class="b" style="left:18px;top:76px;width:1130px;height:1px;background:#e9e9e9"></div>
<div class="b" style="left:778px;top:0px;width:2px;height:400px;background:#efefef"></div>
<div class="b" style="left:917px;top:0px;width:2px;height:400px;background:#efefef"></div>
<div class="b" style="left:18px;top:82px;width:245px;height:230px;background:#f7f7f7;border-radius:7px"></div>
<div class="t" style="left:33.80000000000001px;top:94.0px;line-height:24px;font-size:16.6px;font-weight:400;color:#555;letter-spacing:0.05px;">A. Uniques of All Events</div>
<div class="b" style="left:272px;top:82px;width:245px;height:132px;background:#f7f7f7;border-radius:7px"></div>
<div class="t" style="left:286.70000000000005px;top:94.0px;line-height:24px;font-size:16.6px;font-weight:400;color:#555;letter-spacing:0.26px;">Desktop</div>
<div class="b" style="left:272px;top:224px;width:245px;height:88px;background:#f7f7f7;border-radius:7px"></div>
<div class="t" style="left:286.70000000000005px;top:236.0px;line-height:24px;font-size:16.6px;font-weight:400;color:#555;letter-spacing:0.43px;">Mobile</div>
<div class="b" style="left:18px;top:322px;width:245px;height:120px;background:#f7f7f7;border-radius:7px"></div>
<div class="t" style="left:32.90000000000001px;top:334.0px;line-height:24px;font-size:16.6px;font-weight:400;color:#555;letter-spacing:0.08px;">B. Total Events of meaning...</div>
<div class="b" style="left:272px;top:322px;width:245px;height:120px;background:#f7f7f7;border-radius:7px"></div>
<div class="t" style="left:286.70000000000005px;top:334.0px;line-height:24px;font-size:16.6px;font-weight:400;color:#555;letter-spacing:0.26px;">Desktop</div>
<div class="b" style="left:529px;top:125px;width:619px;height:1px;background:#f2f2f2"></div>
<div class="b" style="left:529px;top:170px;width:619px;height:1px;background:#f2f2f2"></div>
<div class="b" style="left:529px;top:219px;width:619px;height:1px;background:#f2f2f2"></div>
<div class="b" style="left:529px;top:267px;width:619px;height:1px;background:#f2f2f2"></div>
<div class="b" style="left:529px;top:316px;width:619px;height:1px;background:#f2f2f2"></div>
<div class="b" style="left:529px;top:365px;width:619px;height:1px;background:#f2f2f2"></div>
<div class="b" style="left:541px;top:89.5px;width:23px;height:23px;background:#7856ff;border-radius:4.5px"></div>
<div class="b" style="left:548.7px;top:97.20000000000005px;width:7.6px;height:7.6px;background:#fff;border-radius:50%"></div>
<div class="t" style="left:574.8px;top:90.0px;line-height:24px;font-size:16.6px;font-weight:400;color:#555;letter-spacing:0.06px;">All User Profiles</div>
<div class="t" style="right:246px;text-align:right;top:91.0px;line-height:24px;font-size:16px;font-weight:400;color:#555;font-family:'Liberation Mono',monospace;letter-spacing:1.2px;margin-right:-1.2px;">16.2</div>
<div class="t" style="right:104px;text-align:right;top:91.0px;line-height:24px;font-size:16px;font-weight:400;color:#555;font-family:'Liberation Mono',monospace;">0</div>
<div class="b" style="left:541px;top:136.5px;width:23px;height:23px;background:#ff7557;border-radius:4.5px"></div>
<div class="b" style="left:548.7px;top:144.20000000000005px;width:7.6px;height:7.6px;background:#fff;border-radius:50%"></div>
<div class="t" style="left:574.8px;top:137.0px;line-height:24px;font-size:16.6px;font-weight:400;color:#555;letter-spacing:0.02px;">view only users</div>
<div class="t" style="right:246px;text-align:right;top:138.0px;line-height:24px;font-size:16px;font-weight:400;color:#555;font-family:'Liberation Mono',monospace;letter-spacing:1.2px;margin-right:-1.2px;">14.5</div>
<div class="t" style="right:104px;text-align:right;top:138.0px;line-height:24px;font-size:16px;font-weight:400;color:#555;font-family:'Liberation Mono',monospace;">0</div>
<div class="b" style="left:541px;top:183.5px;width:23px;height:23px;background:#80e1d9;border-radius:4.5px"></div>
<div class="b" style="left:548.7px;top:191.20000000000005px;width:7.6px;height:7.6px;background:#fff;border-radius:50%"></div>
<div class="t" style="left:573.9px;top:184.0px;line-height:24px;font-size:16.6px;font-weight:400;color:#555;letter-spacing:0.17px;">Not In view only users</div>
<div class="t" style="right:246px;text-align:right;top:185.0px;line-height:24px;font-size:16px;font-weight:400;color:#555;font-family:'Liberation Mono',monospace;letter-spacing:1.2px;margin-right:-1.2px;">1.7</div>
<div class="t" style="right:104px;text-align:right;top:185.0px;line-height:24px;font-size:16px;font-weight:400;color:#555;font-family:'Liberation Mono',monospace;">0</div>
<div class="b" style="left:541px;top:231.5px;width:23px;height:23px;background:#f8bc3b;border-radius:4.5px"></div>
<div class="b" style="left:548.7px;top:239.20000000000005px;width:7.6px;height:7.6px;background:#fff;border-radius:50%"></div>
<div class="t" style="left:574.8px;top:232.0px;line-height:24px;font-size:16.6px;font-weight:400;color:#555;letter-spacing:0.02px;">view only users</div>
<div class="t" style="right:246px;text-align:right;top:233.0px;line-height:24px;font-size:16px;font-weight:400;color:#555;font-family:'Liberation Mono',monospace;letter-spacing:1.2px;margin-right:-1.2px;">0.5</div>
<div class="t" style="right:104px;text-align:right;top:233.0px;line-height:24px;font-size:16px;font-weight:400;color:#555;font-family:'Liberation Mono',monospace;">0</div>
<div class="b" style="left:541px;top:280.5px;width:23px;height:23px;background:#b2596e;border-radius:4.5px"></div>
<div class="b" style="left:548.7px;top:288.20000000000005px;width:7.6px;height:7.6px;background:#fff;border-radius:50%"></div>
<div class="t" style="left:574.8px;top:281.0px;line-height:24px;font-size:16.6px;font-weight:400;color:#555;letter-spacing:0.06px;">All User Profiles</div>
<div class="t" style="right:246px;text-align:right;top:282.0px;line-height:24px;font-size:16px;font-weight:400;color:#555;font-family:'Liberation Mono',monospace;letter-spacing:1.2px;margin-right:-1.2px;">0.5</div>
<div class="t" style="right:104px;text-align:right;top:282.0px;line-height:24px;font-size:16px;font-weight:400;color:#555;font-family:'Liberation Mono',monospace;">0</div>
<div class="b" style="left:541px;top:329.5px;width:23px;height:23px;background:#72bef4;border-radius:4.5px"></div>
<div class="b" style="left:548.7px;top:337.20000000000005px;width:7.6px;height:7.6px;background:#fff;border-radius:50%"></div>
<div class="t" style="left:573.9px;top:330.0px;line-height:24px;font-size:16.6px;font-weight:400;color:#555;letter-spacing:0.17px;">Not In view only users</div>
<div class="t" style="right:246px;text-align:right;top:331.0px;line-height:24px;font-size:16px;font-weight:400;color:#555;font-family:'Liberation Mono',monospace;letter-spacing:1.2px;margin-right:-1.2px;">6.7</div>
<div class="t" style="right:104px;text-align:right;top:331.0px;line-height:24px;font-size:16px;font-weight:400;color:#555;font-family:'Liberation Mono',monospace;">0</div>
<div class="b" style="left:541px;top:378.5px;width:23px;height:23px;background:#ffb27a;border-radius:4.5px"></div>
<div class="b" style="left:548.7px;top:386.20000000000005px;width:7.6px;height:7.6px;background:#fff;border-radius:50%"></div>
<div class="t" style="left:574.8px;top:379.0px;line-height:24px;font-size:16.6px;font-weight:400;color:#555;letter-spacing:0.06px;">All User Profiles</div>
<div class="t" style="right:246px;text-align:right;top:380.0px;line-height:24px;font-size:16px;font-weight:400;color:#555;font-family:'Liberation Mono',monospace;letter-spacing:1.2px;margin-right:-1.2px;">6.7</div>
<div class="t" style="right:104px;text-align:right;top:380.0px;line-height:24px;font-size:16px;font-weight:400;color:#555;font-family:'Liberation Mono',monospace;">0</div>
</div>
<div class="b" style="left:1488px;top:801px;width:13px;height:291px;background:#c6c6c6;border-radius:7px"></div>
<div class="b" style="left:358px;top:1187px;width:717px;height:14px;background:#c4c4c4;border-radius:7px"></div>
<div class="b" style="left:1501px;top:77px;width:1px;height:1123px;background:#e6e6e6"></div>
<div class="t" style="left:1517.4px;top:89.0px;line-height:24px;font-size:17px;font-weight:400;color:#4f44e0;-webkit-text-stroke:.55px #4f44e0;letter-spacing:0.48px;">Query</div>
<div class="b" style="left:1517.5px;top:123px;width:49.5px;height:3.5px;background:#4f44e0;border-radius:2px"></div>
<div class="t" style="left:1596.9px;top:89.0px;line-height:24px;font-size:16.8px;font-weight:400;color:#8a8a8a;letter-spacing:0.79px;">Chart</div>
<div class="t" style="left:1672.8px;top:89.0px;line-height:24px;font-size:16.8px;font-weight:400;color:#8a8a8a;letter-spacing:0.48px;">Annotations</div>
<div class="b" style="left:1502px;top:127px;width:418px;height:1px;background:#e9e9e9"></div>
<div class="b" style="left:1606px;top:128px;width:320px;height:57px;background:#f5f5f5;border:1px solid #e9e9e9;border-top:none;border-radius:0 0 0 9px"></div>
<div class="b" style="left:1711px;top:128px;width:1px;height:56px;background:#ebebeb"></div>
<div class="b" style="left:1815px;top:128px;width:1px;height:56px;background:#ebebeb"></div>
<svg class="b" style="left:1542px;top:144px;" width="24" height="24" viewBox="0 0 24 24" fill="none"><rect x="1.6" y="1.6" width="20.8" height="20.8" rx="2" stroke="#4f44e0" stroke-width="1.6"/>
<path d="M5.5 12.6 L9.2 9 L11.8 11.2 L17.6 5.6" stroke="#4f44e0" stroke-width="1.6" stroke-linecap="round" stroke-linejoin="round"/>
<path d="M6.4 17 V18.6 M12 15.6 V18.6 M17.6 17 V18.6" stroke="#4f44e0" stroke-width="1.6" stroke-linecap="round"/></svg>
<svg class="b" style="left:1646px;top:144px;" width="26" height="24" viewBox="0 0 26 24" fill="none"><rect x="1.6" y="1.6" width="4.6" height="20.8" rx="1.4" stroke="#757575" stroke-width="1.5"/>
<rect x="10" y="10" width="4.6" height="12.4" rx="1.4" stroke="#757575" stroke-width="1.5"/>
<rect x="18.2" y="16" width="4.6" height="6.4" rx="1.4" stroke="#757575" stroke-width="1.5"/></svg>
<svg class="b" style="left:1752px;top:144px;" width="24" height="24" viewBox="0 0 24 24" fill="none"><rect x="1.2" y="1.6" width="21.6" height="4.8" rx="2.4" stroke="#757575" stroke-width="1.5"/>
<circle cx="20.3" cy="12" r="2.2" stroke="#757575" stroke-width="1.5"/><circle cx="3.7" cy="20.2" r="2.2" stroke="#757575" stroke-width="1.5"/>
<path d="M3.4 10 C10 10 11.5 17.8 18 17.8 H20.6 a2.3 2.3 0 0 1 0 4.6 H18 C10.5 22.4 9.5 14.6 3.4 14.6 a2.3 2.3 0 0 1 0 -4.6 Z" stroke="#757575" stroke-width="1.5" stroke-linejoin="round"/></svg>
<svg class="b" style="left:1856.6px;top:144.5px;" width="24" height="24" viewBox="0 0 24 24" fill="none"><circle cx="3.4" cy="3.4" r="2.4" stroke="#757575" stroke-width="1.5"/><circle cx="11.8" cy="3.4" r="2.4" stroke="#757575" stroke-width="1.5"/><circle cx="20.2" cy="3.4" r="2.4" stroke="#757575" stroke-width="1.5"/><circle cx="3.4" cy="11.8" r="2.4" stroke="#757575" stroke-width="1.5"/><circle cx="11.8" cy="11.8" r="2.4" stroke="#757575" stroke-width="1.5"/><circle cx="3.4" cy="20.2" r="2.4" stroke="#757575" stroke-width="1.5"/></svg>
<div class="t" style="left:1537.6px;top:229.0px;line-height:24px;font-size:16.8px;font-weight:400;color:#1f1f1f;-webkit-text-stroke:.6px #1f1f1f;letter-spacing:0.79px;">Metrics</div>
<svg class="b" style="left:1862.5px;top:232.0px;" width="16" height="16" viewBox="0 0 16 16" fill="none"><path d="M8.0 1 V15 M1 8.0 H15" stroke="#1f1f1f" stroke-width="1.8" stroke-linecap="round"/></svg>
<div class="card" style="left:1523px;top:273.5px;width:376px;height:208px"></div>
<div class="b" style="left:1534px;top:289.5px;width:19.3px;height:19.6px;background:#ebebeb;border-radius:3.5px"></div>
<div class="t" style="left:1343.7px;width:400px;text-align:center;top:287.7px;line-height:24px;font-size:13.6px;font-weight:400;color:#4f4f4f;-webkit-text-stroke:.5px #4f4f4f;">A</div>
<svg class="b" style="left:1561.0px;top:287.9px;" width="24" height="24" viewBox="0 0 24 24" fill="none"><path d="M12.00 2.30 L20.40 7.15 L20.40 16.85 L12.00 21.70 L3.60 16.85 L3.60 7.15 Z" stroke="#1f1f1f" stroke-width="1.9" stroke-linejoin="round" stroke-linecap="round" stroke-dasharray="6.0 3.6999999999999993" stroke-dashoffset="3.0"/>
<path d="M12.00 6.90 L16.42 9.45 L16.42 14.55 L12.00 17.10 L7.58 14.55 L7.58 9.45 Z" stroke="#1f1f1f" stroke-width="1.9" stroke-linejoin="round"/></svg>
<div class="t" style="left:1597.0px;top:287.5px;line-height:24px;font-size:16.8px;font-weight:400;color:#8a8a8a;letter-spacing:0.31px;">Uniques of All Events</div>
<div class="b" style="left:1554.5px;top:325.0px;width:337.5px;height:83px;border:1px solid #f6f6f6;border-radius:10px;box-shadow:0 1px 2px rgba(0,0,0,.035)"></div>
<svg class="b" style="left:1561.0px;top:334.8px;" width="24" height="24" viewBox="0 0 24 24" fill="none"><path d="M12.00 2.00 L20.66 7.00 L20.66 17.00 L12.00 22.00 L3.34 17.00 L3.34 7.00 Z" fill="#b9b3f6" stroke="#5f52e6" stroke-width="1.4" stroke-linejoin="round"/></svg>
<div class="t" style="left:1597.9px;top:334.5px;line-height:24px;font-size:16.8px;font-weight:400;color:#1f1f1f;-webkit-text-stroke:.35px #1f1f1f;letter-spacing:0.09px;">All Events</div>
<svg class="b" style="left:1561.0px;top:375.5px;" width="24" height="24" viewBox="0 0 24 24" fill="none"><path d="M12.00 2.00 L20.66 7.00 L20.66 17.00 L12.00 22.00 L3.34 17.00 L3.34 7.00 Z" stroke="#666" stroke-width="1.2" stroke-linejoin="round"/><path d="M12 7 V17 M7 12 H17" stroke="#2a2a2a" stroke-width="1.7" stroke-linecap="round"/></svg>
<div class="t" style="left:1597.9px;top:375.5px;line-height:24px;font-size:16.8px;font-weight:400;color:#8a8a8a;letter-spacing:0.26px;">Add Event</div>
<div class="t" style="left:1564px;top:418.0px;line-height:24px;font-size:15px;font-weight:400;color:#1f1f1f;-webkit-text-stroke:.25px #1f1f1f;">#</div>
<div class="t" style="left:1585.6px;top:418.0px;line-height:24px;font-size:14.6px;font-weight:400;color:#1f1f1f;-webkit-text-stroke:.25px #1f1f1f;letter-spacing:0.07px;">User</div>
<svg class="b" style="left:1625.55px;top:426.275px;" width="10.9" height="7.45" viewBox="0 0 10.9 7.45" fill="none"><path d="M2 2 L5.45 5.45 L8.9 2" stroke="#1f1f1f" stroke-width="1.7" stroke-linecap="round" stroke-linejoin="round"/></svg>
<div class="t" style="left:1645.8px;top:418.0px;line-height:24px;font-size:14.6px;font-weight:400;color:#1f1f1f;-webkit-text-stroke:.25px #1f1f1f;letter-spacing:0.28px;">Uniques - Cumulative Users</div>
<svg class="b" style="left:1843.55px;top:426.275px;" width="10.9" height="7.45" viewBox="0 0 10.9 7.45" fill="none"><path d="M2 2 L5.45 5.45 L8.9 2" stroke="#1f1f1f" stroke-width="1.7" stroke-linecap="round" stroke-linejoin="round"/></svg>
<div class="t" style="left:1563.1px;top:448.0px;line-height:24px;font-size:14.6px;font-weight:400;color:#1f1f1f;-webkit-text-stroke:.25px #1f1f1f;letter-spacing:0.20px;">Cumulative Sum</div>
<svg class="b" style="left:1683px;top:453.5px;" width="12" height="12" viewBox="0 0 12 12" fill="none"><path d="M1.5 1.5 L10.5 10.5 M10.5 1.5 L1.5 10.5" stroke="#5a5a5a" stroke-width="1.3" stroke-linecap="round"/></svg>
<div class="card" style="left:1523px;top:492px;width:376px;height:177px"></div>
<div class="b" style="left:1534px;top:508px;width:19.3px;height:19.6px;background:#ebebeb;border-radius:3.5px"></div>
<div class="t" style="left:1343.7px;width:400px;text-align:center;top:506.20000000000005px;line-height:24px;font-size:13.6px;font-weight:400;color:#4f4f4f;-webkit-text-stroke:.5px #4f4f4f;">B</div>
<svg class="b" style="left:1561.0px;top:506.4px;" width="24" height="24" viewBox="0 0 24 24" fill="none"><path d="M12.00 2.30 L20.40 7.15 L20.40 16.85 L12.00 21.70 L3.60 16.85 L3.60 7.15 Z" stroke="#1f1f1f" stroke-width="1.9" stroke-linejoin="round" stroke-linecap="round" stroke-dasharray="6.0 3.6999999999999993" stroke-dashoffset="3.0"/>
<path d="M12.00 6.90 L16.42 9.45 L16.42 14.55 L12.00 17.10 L7.58 14.55 L7.58 9.45 Z" stroke="#1f1f1f" stroke-width="1.9" stroke-linejoin="round"/></svg>
<div class="t" style="left:1597.9px;top:506.0px;line-height:24px;font-size:16.8px;font-weight:400;color:#8a8a8a;letter-spacing:0.45px;">Total Events of meaningful interact...</div>
<div class="b" style="left:1554.5px;top:543.5px;width:337.5px;height:83px;border:1px solid #f6f6f6;border-radius:10px;box-shadow:0 1px 2px rgba(0,0,0,.035)"></div>
<svg class="b" style="left:1561.0px;top:553.3px;" width="24" height="24" viewBox="0 0 24 24" fill="none"><path d="M12.00 2.00 L20.66 7.00 L20.66 17.00 L12.00 22.00 L3.34 17.00 L3.34 7.00 Z" fill="#b9b3f6" stroke="#5f52e6" stroke-width="1.4" stroke-linejoin="round"/></svg>
<div class="t" style="left:1597.0px;top:553.0px;line-height:24px;font-size:16.8px;font-weight:400;color:#1f1f1f;-webkit-text-stroke:.35px #1f1f1f;letter-spacing:0.66px;">meaningful interaction</div>
<svg class="b" style="left:1561.0px;top:594px;" width="24" height="24" viewBox="0 0 24 24" fill="none"><path d="M12.00 2.00 L20.66 7.00 L20.66 17.00 L12.00 22.00 L3.34 17.00 L3.34 7.00 Z" stroke="#666" stroke-width="1.2" stroke-linejoin="round"/><path d="M12 7 V17 M7 12 H17" stroke="#2a2a2a" stroke-width="1.7" stroke-linecap="round"/></svg>
<div class="t" style="left:1597.9px;top:594.0px;line-height:24px;font-size:16.8px;font-weight:400;color:#8a8a8a;letter-spacing:0.26px;">Add Event</div>
<div class="t" style="left:1564px;top:637.0px;line-height:24px;font-size:15px;font-weight:400;color:#1f1f1f;-webkit-text-stroke:.25px #1f1f1f;">#</div>
<div class="t" style="left:1585.6px;top:636.5px;line-height:24px;font-size:14.6px;font-weight:400;color:#1f1f1f;-webkit-text-stroke:.25px #1f1f1f;letter-spacing:0.07px;">User</div>
<svg class="b" style="left:1625.55px;top:645.275px;" width="10.9" height="7.45" viewBox="0 0 10.9 7.45" fill="none"><path d="M2 2 L5.45 5.45 L8.9 2" stroke="#1f1f1f" stroke-width="1.7" stroke-linecap="round" stroke-linejoin="round"/></svg>
<div class="t" style="left:1646.5px;top:637.0px;line-height:24px;font-size:14.6px;font-weight:400;color:#1f1f1f;-webkit-text-stroke:.25px #1f1f1f;letter-spacing:0.10px;">Total Events</div>
<svg class="b" style="left:1735.55px;top:645.275px;" width="10.9" height="7.45" viewBox="0 0 10.9 7.45" fill="none"><path d="M2 2 L5.45 5.45 L8.9 2" stroke="#1f1f1f" stroke-width="1.7" stroke-linecap="round" stroke-linejoin="round"/></svg>
<div class="card" style="left:1523px;top:680px;width:376px;height:53px"></div>
<div class="b" style="left:1534px;top:696px;width:19.3px;height:19.6px;background:#ebebeb;border-radius:3.5px"></div>
<div class="t" style="left:1343.7px;width:400px;text-align:center;top:694.2px;line-height:24px;font-size:13.6px;font-weight:400;color:#4f4f4f;-webkit-text-stroke:.5px #4f4f4f;">C</div>
<div class="t" style="left:1575.2px;top:695.0px;line-height:24px;font-size:16.8px;font-weight:400;color:#1f1f1f;-webkit-text-stroke:.35px #1f1f1f;letter-spacing:0.58px;">Add Metric</div>
<div class="t" style="left:1537.6px;top:787.0px;line-height:24px;font-size:16.8px;font-weight:400;color:#1f1f1f;-webkit-text-stroke:.6px #1f1f1f;letter-spacing:0.93px;">Filter</div>
<svg class="b" style="left:1862.5px;top:790.0px;" width="16" height="16" viewBox="0 0 16 16" fill="none"><path d="M8.0 1 V15 M1 8.0 H15" stroke="#1f1f1f" stroke-width="1.8" stroke-linecap="round"/></svg>
<div class="card" style="left:1523px;top:832px;width:376px;height:86px"></div>
<div class="t" style="left:1542.2px;top:847.0px;line-height:24px;font-size:13.5px;font-weight:400;color:#2a9d6b;-webkit-text-stroke:.3px #2a9d6b;letter-spacing:0.14px;">Aa</div>
<div class="t" style="left:1571.0px;top:847.0px;line-height:24px;font-size:16.8px;font-weight:400;color:#1f1f1f;-webkit-text-stroke:.35px #1f1f1f;letter-spacing:0.90px;">Country</div>
<svg class="b" style="left:1872px;top:850px;" width="6" height="18" viewBox="0 0 6 18" fill="none"><circle cx="3" cy="2.4" r="1.55" fill="#707070"/><circle cx="3" cy="9" r="1.55" fill="#707070"/><circle cx="3" cy="15.6" r="1.55" fill="#707070"/></svg>
<div class="t" style="left:1570.6px;top:885.0px;line-height:24px;font-size:14.6px;font-weight:400;color:#5f5f5f;letter-spacing:-0.53px;">Is</div>
<div class="t" style="left:1599.0px;top:885.0px;line-height:24px;font-size:14.6px;font-weight:400;color:#5f5f5f;letter-spacing:0.20px;">Singapore or United States</div>
<div class="t" style="left:1537.6px;top:978.0px;line-height:24px;font-size:16.8px;font-weight:400;color:#1f1f1f;-webkit-text-stroke:.6px #1f1f1f;letter-spacing:0.69px;">Breakdown</div>
<svg class="b" style="left:1862.5px;top:981.0px;" width="16" height="16" viewBox="0 0 16 16" fill="none"><path d="M8.0 1 V15 M1 8.0 H15" stroke="#1f1f1f" stroke-width="1.8" stroke-linecap="round"/></svg>
<div class="card" style="left:1523px;top:1023px;width:376px;height:53px"></div>
<div class="t" style="left:1544.2px;top:1035.5px;line-height:24px;font-size:12.8px;font-weight:400;color:#2a9d6b;-webkit-text-stroke:.3px #2a9d6b;">Aa</div>
<svg class="b" style="left:1539.5px;top:1050.5px;" width="8" height="8" viewBox="0 0 8 8" fill="none"><path d="M4 .6 V7.4 M.8 2.2 L7.2 5.8 M7.2 2.2 L.8 5.8" stroke="#2a9d6b" stroke-width="1.2" stroke-linecap="round"/></svg>
<div class="t" style="left:1571.7px;top:1038.0px;line-height:24px;font-size:17px;font-weight:400;color:#1f1f1f;font-style:italic;-webkit-text-stroke:.3px #1f1f1f;letter-spacing:0.71px;">device type*</div>
<svg class="b" style="left:1872px;top:1040.5px;" width="6" height="18" viewBox="0 0 6 18" fill="none"><circle cx="3" cy="2.4" r="1.55" fill="#707070"/><circle cx="3" cy="9" r="1.55" fill="#707070"/><circle cx="3" cy="15.6" r="1.55" fill="#707070"/></svg>
<div class="card" style="left:1523px;top:1087px;width:376px;height:53px"></div>
<svg class="b" style="left:1540px;top:1105px;" width="21" height="16" viewBox="0 0 21 16" fill="none"><circle cx="10.5" cy="4" r="2.6" stroke="#2a9d6b" stroke-width="1.3"/><circle cx="3.9" cy="6" r="2" stroke="#2a9d6b" stroke-width="1.3"/><circle cx="17.1" cy="6" r="2" stroke="#2a9d6b" stroke-width="1.3"/>
<path d="M5.8 14.6 V12.6 a4.7 4.7 0 0 1 9.4 0 V14.6 Z M1 14.6 V12.4 a2.9 2.9 0 0 1 4.6 -2.3 M20 14.6 V12.4 a2.9 2.9 0 0 0 -4.6 -2.3 M1 14.6 H20" stroke="#2a9d6b" stroke-width="1.3" stroke-linejoin="round"/></svg>
<div class="t" style="left:1571.3px;top:1102.0px;line-height:24px;font-size:17px;font-weight:400;color:#1f1f1f;font-style:italic;-webkit-text-stroke:.3px #1f1f1f;letter-spacing:0.74px;">1 cohort*</div>
<svg class="b" style="left:1872px;top:1104px;" width="6" height="18" viewBox="0 0 6 18" fill="none"><circle cx="3" cy="2.4" r="1.55" fill="#707070"/><circle cx="3" cy="9" r="1.55" fill="#707070"/><circle cx="3" cy="15.6" r="1.55" fill="#707070"/></svg>
<div class="b" style="left:1502px;top:1148px;width:418px;height:52px;background:#fff;border-top:1px solid #ececec"></div>
<svg class="b" style="left:1518px;top:1166px;" width="18" height="16" viewBox="0 0 18 16" fill="none"><path d="M1.5 8 H11.5 M7.4 3.6 L11.8 8 L7.4 12.4 M16 2 V14" stroke="#1f1f1f" stroke-width="1.6" stroke-linecap="round" stroke-linejoin="round"/></svg>
<svg class="b" style="left:1882px;top:1162px;" width="24" height="24" viewBox="0 0 24 24" fill="none"><rect x="2" y="2.4" width="20.4" height="19.6" rx="3" stroke="#1f1f1f" stroke-width="1.9"/><path d="M14.6 2.4 V22" stroke="#1f1f1f" stroke-width="1.9"/></svg>
</body></html>
